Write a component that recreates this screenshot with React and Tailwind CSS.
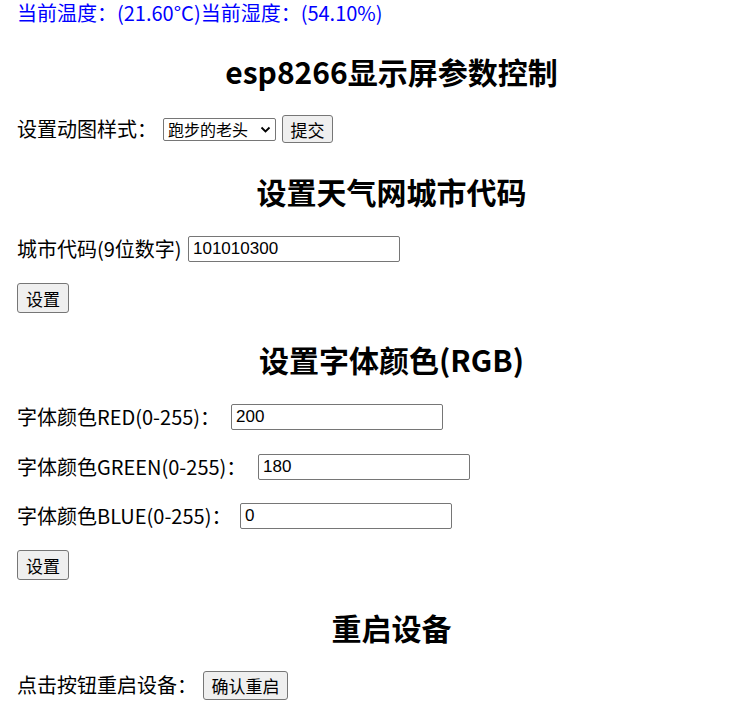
import { useState } from 'react'

const FONT = { fontFamily: '"Microsoft YaHei", "Noto Sans CJK SC", "Noto Sans", sans-serif' }

function Heading({ children, className = '' }) {
  return (
    <h2 className={`h-[40px] flex items-center justify-center pl-[34px] text-[30px] font-bold leading-[40px] text-black ${className}`}>
      {children}
    </h2>
  )
}

function Btn({ children, className = '' }) {
  return (
    <button
      type="button"
      className={`shrink-0 flex items-center justify-center bg-[#efefef] border border-[#767676] rounded-[3px] text-[17px] leading-none text-black hover:bg-[#e5e5e5] ${className}`}
    >
      {children}
    </button>
  )
}

function Field({ value, onChange }) {
  return (
    <input
      value={value}
      onChange={e => onChange(e.target.value)}
      className="shrink-0 w-[212px] h-[26px] border border-[#767676] rounded-[2px] px-[4px] text-[17px] text-black font-['Liberation_Sans',Arial,sans-serif] outline-none"
    />
  )
}

export default function App() {
  const [city, setCity] = useState('101010300')
  const [red, setRed] = useState('200')
  const [green, setGreen] = useState('180')
  const [blue, setBlue] = useState('0')
  const [gif, setGif] = useState('跑步的老头')

  return (
    <div className="w-[749px] min-h-[715px] bg-white text-black text-[20px] leading-[30px] pl-[17px]" style={FONT}>
      {/* status line */}
      <div className="h-[26px] flex items-center leading-[26px] text-[#0000ff] whitespace-nowrap">
        当前温度：(21.60°C)当前湿度：(54.10%)
      </div>

      <Heading className="mt-[25px] -ml-[17px]">esp8266显示屏参数控制</Heading>

      <div className="mt-[23px] h-[30px] flex items-center">
        <span className="w-[146px] shrink-0">设置动图样式：</span>
        <div className="relative shrink-0">
          <select
            value={gif}
            onChange={e => setGif(e.target.value)}
            className="block appearance-none w-[113px] h-[23px] border border-[#767676] rounded-[2px] pl-[4px] pr-[20px] text-[16px] leading-[21px] bg-white"
          >
            <option>跑步的老头</option>
            <option>太空人</option>
            <option>小猫咪</option>
          </select>
          <svg className="absolute right-[5px] top-[8px] pointer-events-none" width="11" height="8" viewBox="0 0 11 8">
            <path d="M1.5 1.5 L5.5 5.5 L9.5 1.5" fill="none" stroke="#000" strokeWidth="1.8" />
          </svg>
        </div>
        <Btn className="ml-[6px] w-[51px] h-[28px]">提交</Btn>
      </div>

      <Heading className="mt-[27px] -ml-[17px]">设置天气网城市代码</Heading>

      <div className="mt-[23px] h-[30px] flex items-center">
        <span className="w-[171px] shrink-0">城市代码(9位数字)</span>
        <Field value={city} onChange={setCity} />
      </div>
      <div className="mt-[19px] h-[30px] flex items-center">
        <Btn className="w-[52px] h-[30px]">设置</Btn>
      </div>

      <Heading className="mt-[26px] -ml-[17px]">设置字体颜色(RGB)</Heading>

      <div className="mt-[23px] h-[30px] flex items-center">
        <span className="w-[214px] shrink-0">字体颜色RED(0-255)：</span>
        <Field value={red} onChange={setRed} />
      </div>
      <div className="mt-[20px] h-[30px] flex items-center">
        <span className="w-[241px] shrink-0">字体颜色GREEN(0-255)：</span>
        <Field value={green} onChange={setGreen} />
      </div>
      <div className="mt-[19px] h-[30px] flex items-center">
        <span className="w-[223px] shrink-0">字体颜色BLUE(0-255)：</span>
        <Field value={blue} onChange={setBlue} />
      </div>
      <div className="mt-[19px] h-[30px] flex items-center">
        <Btn className="w-[52px] h-[30px]">设置</Btn>
      </div>

      <Heading className="mt-[27px] -ml-[17px]">重启设备</Heading>

      <div className="mt-[23px] h-[30px] flex items-center">
        <span className="w-[186px] shrink-0">点击按钮重启设备：</span>
        <Btn className="w-[85px] h-[29px]">确认重启</Btn>
      </div>
    </div>
  )
}
